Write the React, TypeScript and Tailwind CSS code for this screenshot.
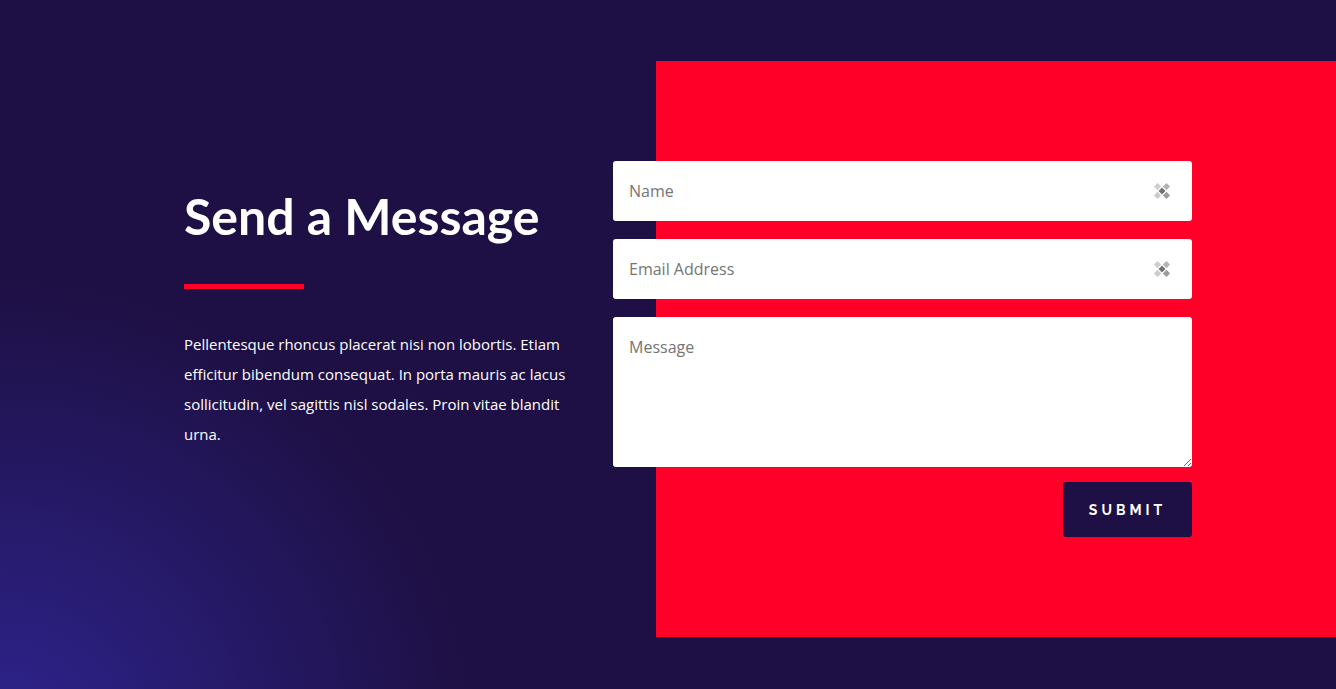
import React from "react";

function FieldMark() {
  return (
    <svg
      aria-hidden="true"
      viewBox="0 0 16 16"
      className="pointer-events-none absolute right-[22px] top-1/2 size-4 -translate-y-1/2"
    >
      <path d="M3.500 0 7.200 3.500 3.500 7.200 0 3.500Z" fill="#cfcfcf" />
      <path d="M12.500 0 16 3.500 12.500 7.200 8.800 3.500Z" fill="#b4b4b4" />
      <path d="M3.500 8.800 7.200 12.500 3.500 16 0 12.500Z" fill="#cbcbcb" />
      <path d="M12.500 8.800 16 12.500 12.500 16 8.800 12.500Z" fill="#9c9c9c" />
      <path d="M8 4.500 11.500 8 8 11.500 4.500 8Z" fill="#727272" />
    </svg>
  );
}

function TextField({ name, label, type }: { name: string; label: string; type: string }) {
  return (
    <div className="relative">
      <input
        name={name}
        type={type}
        aria-label={label}
        placeholder={label}
        className="block h-[60px] w-full rounded-[3px] bg-white px-4 text-base text-[#666] outline-none placeholder:text-[#757575]"
      />
      <FieldMark />
    </div>
  );
}

export default function App() {
  return (
    <main className="min-h-screen bg-[#1e1044] bg-[radial-gradient(circle_at_0_calc(100%_+_54px),#2e2490_0%,#1e1044_472px)] py-[61px] font-['Open_Sans',sans-serif]">
      <div className="bg-[linear-gradient(to_right,transparent_calc(50%_-_12px),#ff0029_calc(50%_-_12px))] py-[100px]">
        <div className="mx-auto flex max-w-[1048px] flex-col gap-10 px-5 md:flex-row md:pr-0 md:pl-10">
          <section className="shrink-0 pt-[25px] md:w-[389px]">
            <h1 className="font-['Lato',sans-serif] text-[50px] font-bold leading-[60px] text-white">Send a Message</h1>
            <div className="mt-[38px] h-[5px] w-[120px] bg-[#ff0029]" />
            <p className="mt-10 text-[15px] leading-[30px] text-white">
              Pellentesque rhoncus placerat nisi non lobortis. Etiam efficitur bibendum consequat. In porta mauris ac lacus sollicitudin, vel sagittis nisl sodales. Proin vitae blandit urna.
            </p>
          </section>
          <form className="flex min-w-0 flex-1 flex-col gap-[18px]" onSubmit={(e) => e.preventDefault()}>
            <TextField name="name" label="Name" type="text" />
            <TextField name="email" label="Email Address" type="email" />
            <div>
              <textarea
                name="message"
                aria-label="Message"
                placeholder="Message"
                className="block h-[150px] w-full resize rounded-[3px] bg-white px-4 py-4 text-base leading-7 text-[#666] outline-none placeholder:text-[#757575]"
              />
              <button
                type="submit"
                className="mt-[15px] ml-auto block h-[55px] w-[129px] rounded-[3px] bg-[#1e1044] font-['Raleway','Lato',sans-serif] text-sm font-bold uppercase tracking-[4px] text-white"
              >
                Submit
              </button>
            </div>
          </form>
        </div>
      </div>
    </main>
  );
}
